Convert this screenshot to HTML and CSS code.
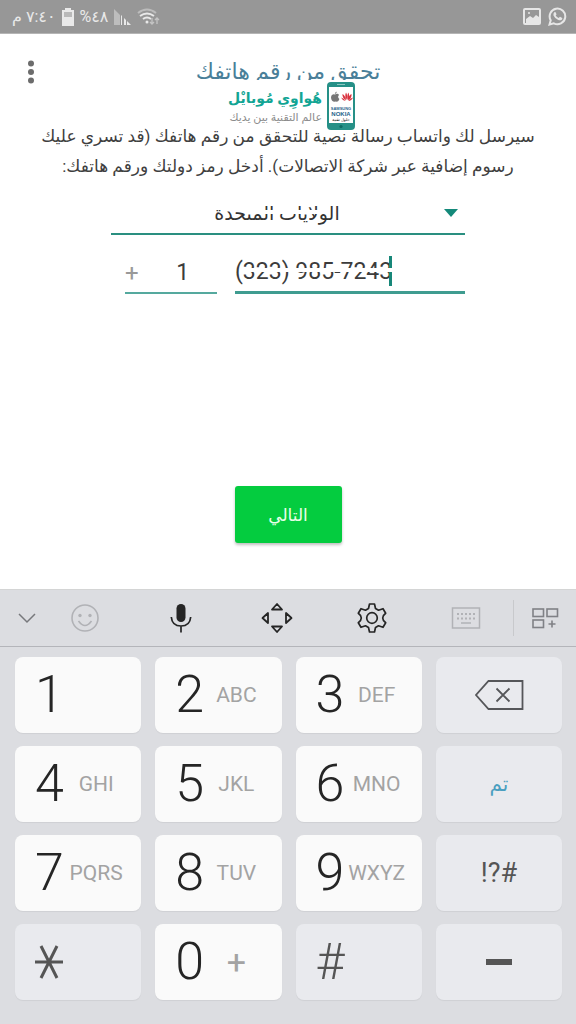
FILE: index.html
```html
<!DOCTYPE html>
<html lang="ar">
<head>
<meta charset="utf-8">
<meta name="viewport" content="width=device-width, initial-scale=1">
<title>تحقق من رقم هاتفك</title>
<link rel="stylesheet" href="styles.css">
</head>
<body>
<div class="statusbar">
  <div class="status-group">
    <span class="status-text" dir="rtl">٧:٤٠ م</span>
    <svg width="12" height="18" viewBox="0 0 12 18"><path fill="#e9e9e9" d="M3 0h6v2h3v16H0V2h3z"/><path fill="#b9b9b9" d="M2 4h8v5H2z"/></svg>
    <span class="status-text" dir="rtl">٤٨%</span>
    <svg width="17" height="18" viewBox="0 0 17 18"><path fill="#bdbdbd" d="M0 1l6 6v10H0z"/><path fill="#e9e9e9" d="M7 7l1 1v9H7zM10 10l2 2v5h-2zM13 13l4 4h-4z"/></svg>
    <svg width="23" height="18" viewBox="0 0 23 18" fill="none" stroke-width="2"><path stroke="#bcbcbc" d="M1 5q9-7 18 0"/><path stroke="#e9e9e9" d="M3 8q7-5 14 0M6 11q4-3 8 0"/><circle cx="10" cy="14" r="1.5" fill="#e9e9e9"/><path stroke="#c4c4c4" stroke-width="1.3" d="M15 10v6M13 14l2 2 2-2M20 16v-6M18 12l2-2 2 2"/></svg>
  </div>
  <div class="status-group status-group-end">
    <svg width="18" height="17" viewBox="0 0 18 17" fill="none"><rect x="1" y="1" width="16" height="15" rx="1" stroke="#e6e6e6" stroke-width="2"/><path fill="#e6e6e6" d="M3 11l4-3 3 2 3-3 3 2v6H3z"/><circle cx="6" cy="5" r="1" fill="#e6e6e6"/></svg>
    <svg width="19" height="19" viewBox="0 0 19 19"><path fill="none" stroke="#e6e6e6" stroke-width="2" d="M1.5 17.5l1.2-4.2A7.8 7.8 0 1 1 5.8 16.300z"/><path fill="#e6e6e6" d="M6.300 5.200q.7-.5 1.300 0l.9 2q0 .6-.8 1.300 1 1.900 3 2.600l1-1.100q.3-.3.8 0l1.700.9q.4.4-.2 1.500-1.400 1.500-3.700.6Q7 11.800 5.500 8.500q-.5-2 .8-3.300z"/></svg>
  </div>
</div>

<main class="verify">
  <header class="header">
    <button class="menu" aria-label="المزيد"><svg width="8" height="24" viewBox="0 0 8 24" fill="#6c6c6c"><circle cx="4" cy="3.500" r="3"/><circle cx="4" cy="12" r="3"/><circle cx="4" cy="20.500" r="3"/></svg></button>
    <h1 class="title" dir="rtl">تحقق من رقم هاتفك</h1>
    <div class="brand">
      <div class="brand-words" dir="rtl">
        <div class="brand-name">هُواوِي مُوبايْل</div>
        <div class="brand-tag">عالم التقنية بين يديك</div>
      </div>
      <svg width="28" height="48" viewBox="0 0 28 48">
        <rect width="28" height="48" rx="4" fill="#269087"/><rect x="2" y="5" width="24" height="36" fill="#fff"/><path d="M10 2.500h8" stroke="#8cc7c1"/><circle cx="14" cy="44.500" r="1.600" fill="#0d6c65"/>
        <path fill="#777" d="M8 12.500q3-1.500 4 .5-2 2 .4 4-1 3-2.600 2.800-1-.6-2 0Q4 19.500 4 15q.5-3.600 4-2.500zM7.800 12q0-2 2-2.600 0 2-2 2.600z"/>
        <g fill="#d9333f"><path d="M18.500 19q-3-.3-4.500-3.500 3 .5 4.500 3.500zM19 18.500q-4-3-3.500-6.500 3 1.500 3.500 6.500zM19.400 18q-2-4-.4-7.500 2 3 .4 7.500zM20.500 18q-.8-5 1-7.500 1.500 4-1 7.500zM21 18.500q0-5 3.500-6.500.500 4-3.500 6.500zM21.500 19q1.300-3 4.500-3.500-1.500 3.300-4.500 3.500z"/></g>
        <text x="14" y="28" text-anchor="middle" class="phone-brand phone-small">SAMSUNG</text>
        <text x="14" y="34" text-anchor="middle" class="phone-brand">NOKIA</text>
        <text x="14" y="39" text-anchor="middle" class="phone-small">حلول تقنية</text>
      </svg>
    </div>
  </header>
  <p class="intro" dir="rtl">سيرسل لك واتساب رسالة نصية للتحقق من رقم هاتفك (قد تسري عليك رسوم إضافية عبر شركة الاتصالات). أدخل رمز دولتك ورقم هاتفك:</p>
  <form class="form">
    <div class="country">
      <select class="country-select" aria-label="الدولة" dir="rtl"><option>الولايات المتحدة</option></select>
      <svg class="arrow" width="14" height="8" viewBox="0 0 14 8"><path fill="#14897a" d="M0 0h14L7 8z"/></svg>
      <span class="country-mask"></span>
    </div>
    <div class="number-row">
      <label class="code"><span class="plus">+</span><input class="code-input" value="1" aria-label="رمز الدولة"></label>
      <div class="phone">
        <input class="phone-input" type="tel" value="(323) 985-7243" aria-label="رقم الهاتف">
        <span class="caret"></span><span class="phone-mask"></span>
      </div>
    </div>
    <button class="next" type="button">التالي</button>
  </form>
</main>

<section class="keyboard">
  <div class="toolbar">
    <button class="tool" aria-label="إخفاء"><svg width="20" height="12" viewBox="0 0 20 12" fill="none" stroke="#77787c" stroke-width="1.500"><path d="M2 2l8 8 8-8"/></svg></button>
    <button class="tool" aria-label="رموز تعبيرية"><svg width="30" height="30" viewBox="0 0 30 30" fill="none" stroke="#b1b2b6" stroke-width="1.600"><circle cx="15" cy="15" r="13"/><path d="M8.500 18q6.500 9 13 0"/><circle cx="10" cy="12.500" r="1.700" fill="#b1b2b6" stroke="none"/><circle cx="20" cy="12.500" r="1.700" fill="#b1b2b6" stroke="none"/></svg></button>
    <button class="tool" aria-label="إدخال صوتي"><svg width="24" height="30" viewBox="0 0 24 30" fill="none" stroke="#252525" stroke-width="1.700"><rect x="7.500" y="1" width="9" height="18" rx="4.500" fill="#252525" stroke="none"/><path d="M2.300 14q.7 9 9.700 9t9.700-9M12 23v6.500"/></svg></button>
    <button class="tool" aria-label="تحريك"><svg width="32" height="32" viewBox="0 0 32 32" fill="none" stroke="#252525" stroke-width="1.800" stroke-linejoin="round"><path d="M16 2l5 5.500H11zM16 30l5-5.500H11zM1.500 16L7 11v10zM30.500 16L25 11v10z"/></svg></button>
    <button class="tool" aria-label="الإعدادات"><svg width="30" height="32" viewBox="0 0 30 32" fill="none" stroke="#252525" stroke-width="1.700" stroke-linejoin="round"><path d="M12.500 2h5l1 4.500 3 1.700 4.500-1.500 2.700 4.600q-3 2.200-3 4.700t3 4.700L26 25.300l-4.500-1.500-3 1.700-1 4.500h-5l-1-4.500-3-1.700L4 25.300l-2.700-4.600q3-2.200 3-4.700t-3-4.700L4 6.700l4.500 1.500 3-1.700z"/><circle cx="15" cy="16" r="5.300"/></svg></button>
    <button class="tool tool-keyboard" aria-label="لوحة المفاتيح"><svg width="30" height="24" viewBox="0 0 30 24" fill="none" stroke="#b1b2b6" stroke-width="1.500"><rect x="1.500" y="2" width="27" height="20"/><path stroke-width="2" stroke-dasharray="2 2" d="M6 8h18M6 12.500h18"/><path d="M10 17h10"/></svg></button>
    <button class="tool tool-last" aria-label="المزيد من الأدوات"><svg width="28" height="22" viewBox="0 0 28 22" fill="none" stroke="#808186" stroke-width="1.600"><rect x="2" y="2" width="10.500" height="7.500"/><rect x="16" y="2" width="10.500" height="7.500"/><rect x="2" y="13" width="10.500" height="7.500"/><path d="M17.500 17h7M21 13.500v7"/></svg></button>
  </div>
  <div class="keys">
    <button class="key"><span class="digit">1</span></button>
    <button class="key"><span class="digit">2</span><span class="letters">ABC</span></button>
    <button class="key"><span class="digit">3</span><span class="letters">DEF</span></button>
    <button class="key key-fn" aria-label="حذف"><svg width="50" height="32" viewBox="0 0 50 32" fill="none" stroke="#555659" stroke-width="1.800"><path d="M14.500 2H48.500v28H14.500L2 16zM22.500 9.500l13 13M35.500 9.500l-13 13"/></svg></button>
    <button class="key"><span class="digit">4</span><span class="letters">GHI</span></button>
    <button class="key"><span class="digit">5</span><span class="letters">JKL</span></button>
    <button class="key"><span class="digit">6</span><span class="letters">MNO</span></button>
    <button class="key key-fn key-done">تم</button>
    <button class="key"><span class="digit">7</span><span class="letters">PQRS</span></button>
    <button class="key"><span class="digit">8</span><span class="letters">TUV</span></button>
    <button class="key"><span class="digit">9</span><span class="letters">WXYZ</span></button>
    <button class="key key-fn key-symbols">!?#</button>
    <button class="key key-dim" aria-label="نجمة"><svg width="28" height="34" viewBox="0 0 28 34" fill="none" stroke="#555" stroke-width="3"><path d="M0 17h28M6 1l16 32M22 1L6 33"/></svg></button>
    <button class="key"><span class="digit">0</span><span class="letters letters-plus">+</span></button>
    <button class="key key-dim"><span class="digit digit-hash">#</span></button>
    <button class="key key-fn" aria-label="شرطة"><svg width="26" height="6" viewBox="0 0 26 6"><path fill="#555" d="M0 0h26v6H0z"/></svg></button>
  </div>
</section>
</body>
</html>
```
FILE: styles.css
```css
* { box-sizing: border-box; }
body {
  margin: 0;
  min-height: 100vh;
  display: flex;
  flex-direction: column;
  background: #fff;
  font-family: Roboto, "DejaVu Sans", sans-serif;
  color: #3c3c3c;
}
button, input, select {
  font: inherit;
  color: inherit;
  border: 0;
  padding: 0;
  margin: 0;
  background: none;
  outline: 0;
  border-radius: 0;
}
svg { display: block; flex: none; }

.statusbar {
  height: 34px;
  display: flex;
  align-items: center;
  justify-content: space-between;
  padding: 0 9px 0 12px;
  background: #979797;
  border-bottom: 1px solid #b5b5b5;
}
.status-group { display: flex; align-items: center; gap: 6px; }
.status-group-end { gap: 7px; }
.status-text { font-size: 16px; line-height: 24px; color: #e9e9e9; }

.verify { flex: 1; display: flex; flex-direction: column; }
.header {
  position: relative;
  display: grid;
  grid-template-columns: 32px 1fr 32px;
  align-items: center;
  padding: 16px 15px 0;
}
.menu { display: flex; justify-content: center; }
.title {
  margin: 0;
  font-size: 22px;
  line-height: 44px;
  font-weight: 400;
  text-align: center;
  color: #4a7f99;
}
.brand {
  position: absolute;
  top: 46px;
  left: 50%;
  margin-left: -68px;
  width: 136px;
  display: flex;
  justify-content: flex-end;
  align-items: center;
  gap: 5px;
  padding: 2px 1px 0 0;
  background: #fff;
}
.brand-words { white-space: nowrap; }
.brand-name { font-size: 14px; line-height: 24px; font-weight: 700; color: #12a594; }
.brand-tag { font-size: 11px; line-height: 16px; color: #8c8c8c; }
.phone-brand { font: 700 6px "Liberation Sans", sans-serif; fill: #27648c; }
.phone-small { font-size: 4px; }

.intro {
  margin: 27px 32px 0;
  font-size: 17px;
  line-height: 30px;
  text-align: center;
  color: #3f3f3f;
}
.form {
  margin: 12px 111px 0;
  display: flex;
  flex-direction: column;
}
.country {
  position: relative;
  display: flex;
  align-items: center;
  border-bottom: 2px solid #2a8f80;
}
.country-select {
  appearance: none;
  width: 100%;
  height: 40px;
  padding: 0 22px 0 0;
  text-align: center;
  text-align-last: center;
  font-size: 19px;
  color: #333;
}
.arrow { position: absolute; right: 7px; }
.country-mask {
  position: absolute;
  left: 38%;
  right: 40%;
  top: 17px;
  height: 4px;
  background: #fff;
}
.number-row { display: flex; gap: 18px; padding: 16px 0 0 14px; align-items: flex-end; }
.code {
  flex: 2;
  display: flex;
  align-items: center;
  border-bottom: 2px solid #55a99e;
  height: 41px;
}
.plus { font-size: 24px; color: #999; }
.code-input { flex: 1; width: 0; min-width: 0; text-align: center; font-size: 23px; padding-left: 10px; }
.phone { position: relative; flex: 5; display: flex; border-bottom: 3px solid #3f9c90; }
.phone-input { width: 100%; height: 40px; font-size: 23px; }
.caret { position: absolute; left: 154px; top: 5px; width: 3px; height: 30px; background: #178779; }
.phone-mask { position: absolute; left: 10px; right: 70px; top: 17px; height: 4px; background: #fff; }
.next {
  align-self: center;
  min-width: 107px;
  height: 57px;
  margin-top: 192px;
  border-radius: 3px;
  background: #04cc3f;
  color: #e9ffe9;
  font-size: 17px;
  box-shadow: 0 2px 3px rgba(0, 0, 0, .25);
}

.keyboard { background: #dcdde1; border-top: 1px solid #d4d5d5; }
.toolbar {
  display: grid;
  grid-template-columns: 53fr 63fr 130fr 61fr 130fr 76fr 63fr;
  height: 57px;
  align-items: center;
  border-bottom: 1px solid #b4b5ba;
}
.tool { display: flex; justify-content: center; align-items: center; height: 36px; }
.tool-keyboard { padding-right: 18px; }
.tool-last { border-left: 1px solid #c8c9cc; }
.keys {
  display: grid;
  grid-template-columns: repeat(4, 1fr);
  grid-auto-rows: 76px;
  gap: 13px 14px;
  padding: 10px 14px 24px 15px;
}
.key {
  display: grid;
  grid-template-columns: 29px 1fr;
  align-items: center;
  padding: 0 13px 0 20px;
  border-radius: 8px;
  background: #fafafa;
  box-shadow: 0 1px 1px rgba(0, 0, 0, .06);
  color: #252525;
}
.key-fn, .key-dim { background: #e9eaee; color: #555; }
.key-fn { display: flex; align-items: center; justify-content: center; padding: 0; }
.key-done { font-size: 20px; color: #4a9fc0; }
.key-symbols { font-size: 27px; }
.digit { font-size: 52px; line-height: 76px; font-weight: 300; text-align: center; }
.digit-hash { font-size: 50px; }
.letters { font-size: 21px; line-height: 28px; text-align: center; color: #a3a3a3; }
.letters-plus { font-size: 34px; }
```
